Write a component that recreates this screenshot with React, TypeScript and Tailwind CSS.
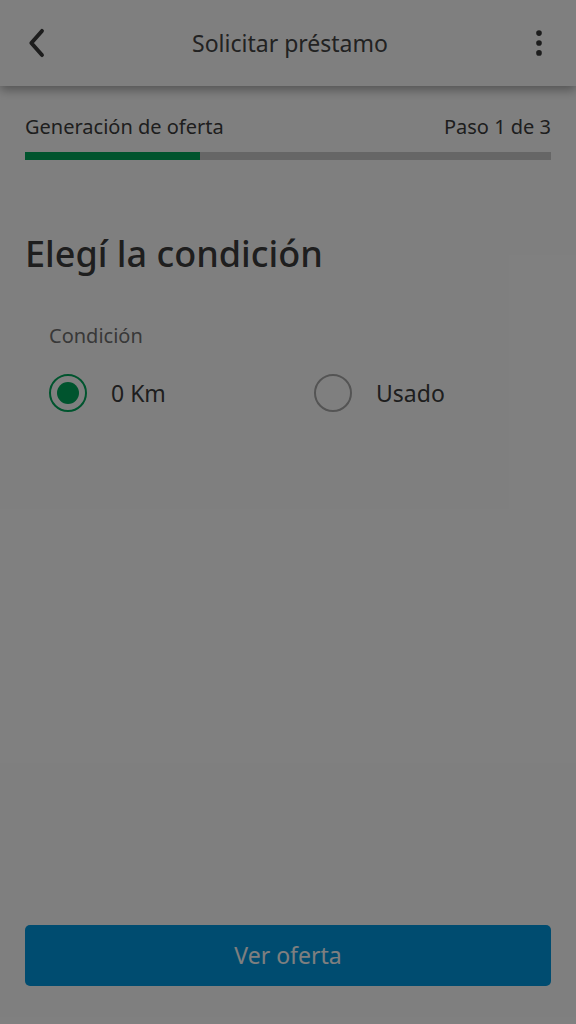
import { useState } from 'react';

const options = [
  { value: '0km', label: '0 Km' },
  { value: 'usado', label: 'Usado' },
];

export default function App() {
  const [condition, setCondition] = useState('0km');

  return (
    <div className="relative min-h-[1024px] bg-white flex flex-col" style={{ fontFamily: '"Noto Sans", "Open Sans", sans-serif' }}>
      <header className="h-[86px] flex items-center justify-between px-[20px] bg-white shadow-[0_4px_10px_rgba(0,0,0,0.35)] relative z-10">
        <svg width="34" height="34" viewBox="0 0 24 24" fill="none" stroke="#3a3a3a" strokeWidth="2.8" strokeLinecap="round" strokeLinejoin="round">
          <path d="M15.5 3.5 L8 12 L15.5 20.5" />
        </svg>
        <h1 className="text-[23px] text-[#444] ml-[4px]">Solicitar préstamo</h1>
        <svg width="34" height="34" viewBox="0 0 24 24" fill="#3a3a3a">
          <circle cx="12" cy="5" r="2" />
          <circle cx="12" cy="12" r="2" />
          <circle cx="12" cy="19" r="2" />
        </svg>
      </header>

      <div className="px-[25px] pt-[27px]">
        <div className="flex justify-between text-[20px] text-[#3c3c3c] leading-[28px]">
          <span>Generación de oferta</span>
          <span>Paso 1 de 3</span>
        </div>
        <div className="mt-[11px] h-[8px] bg-[#cdcdcd] flex">
          <div className="w-1/3 bg-[#00a95c]" />
        </div>

        <h2 className="mt-[71px] text-[36px] font-medium text-[#3c3c3c] leading-[46px]">Elegí la condición</h2>

        <div className="mt-[45px] pl-[24px]">
          <p className="text-[20px] text-[#707070] leading-[28px]">Condición</p>
          <div className="mt-[24px] flex">
            {options.map((o) => (
              <label key={o.value} className="w-[265px] shrink-0 flex items-center gap-[24px] cursor-pointer">
                <input type="radio" className="hidden" checked={condition === o.value} onChange={() => setCondition(o.value)} />
                <span className={`w-[38px] h-[38px] rounded-full border-2 flex items-center justify-center ${condition === o.value ? 'border-[#00a95c]' : 'border-[#a8a8a8]'}`}>
                  {condition === o.value && <span className="w-[22px] h-[22px] rounded-full bg-[#00a95c]" />}
                </span>
                <span className="text-[23px] text-[#3c3c3c]">{o.label}</span>
              </label>
            ))}
          </div>
        </div>
      </div>

      <div className="mt-auto px-[25px] pb-[38px]">
        <button className="w-full h-[61px] rounded-[5px] bg-[#0099e0] text-white text-[23px]">Ver oferta</button>
      </div>

      <div className="absolute inset-0 z-20 bg-black/50" />
    </div>
  );
}
